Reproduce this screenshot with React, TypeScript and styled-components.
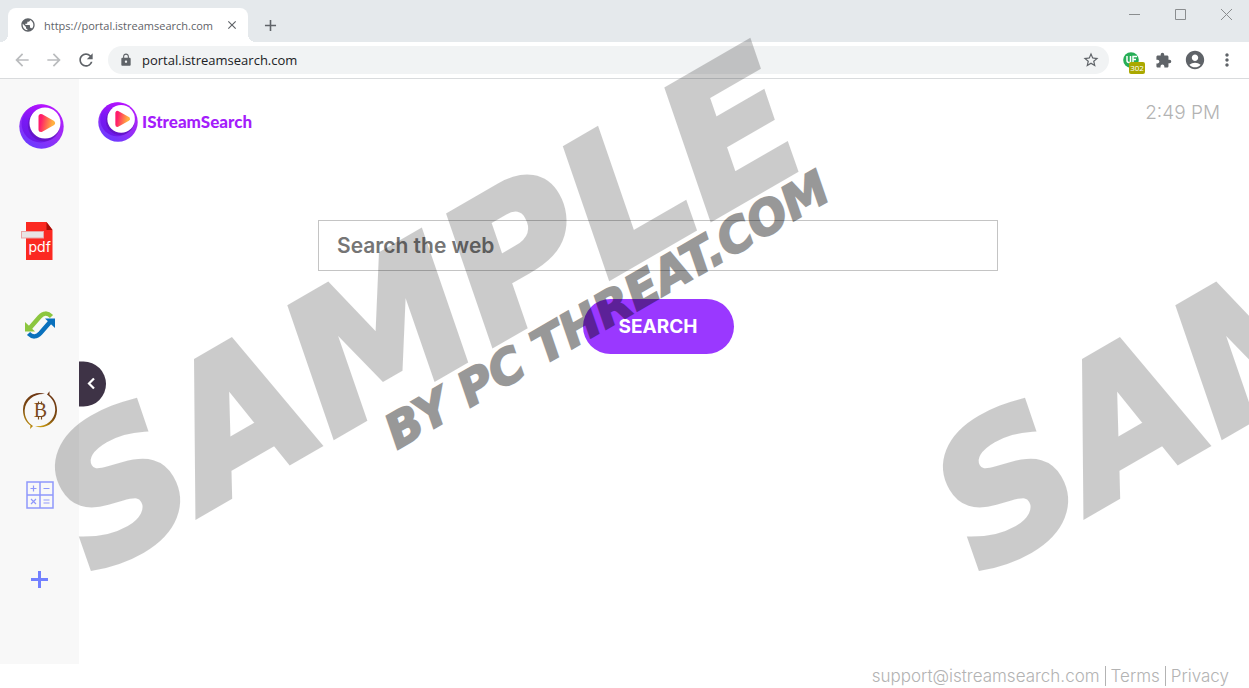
import React from "react";
import styled, { createGlobalStyle } from "styled-components";
import {
  MdAccountCircle, MdAdd, MdArrowBack, MdArrowForward, MdClose, MdExtension,
  MdLock, MdMoreVert, MdPublic, MdRefresh, MdStarBorder,
} from "react-icons/md";

const GlobalStyle = createGlobalStyle`
  * { box-sizing: border-box; }
  body { margin: 0; background: #fff; font-family: Inter, "Liberation Sans", sans-serif; }
  button { border: 0; padding: 0; background: none; font: inherit; color: inherit; cursor: pointer; }
  a { color: inherit; text-decoration: none; }
  svg { flex: none; }
`;

const Page = styled.div`
  position: relative;
  display: flex;
  flex-direction: column;
  min-height: 100vh;
  overflow: hidden;
`;

const TabStrip = styled.div`
  display: flex;
  align-items: flex-end;
  height: 42px;
  padding-left: 8px;
  background: #e5e9ec;
`;

const Tab = styled.div`
  position: relative;
  display: flex;
  align-items: center;
  gap: 8px;
  width: 240px;
  height: 34px;
  padding: 0 8px 0 12px;
  border-radius: 8px 8px 0 0;
  background: #fff;
  color: #5f6368;
  font: 11px "Open Sans", sans-serif;

  &::before, &::after {
    content: "";
    position: absolute;
    bottom: 0;
    width: 8px;
    height: 8px;
  }
  &::before { left: -8px; background: radial-gradient(circle at 0 0, #e5e9ec 8px, #fff 8px); }
  &::after { right: -8px; background: radial-gradient(circle at 100% 0, #e5e9ec 8px, #fff 8px); }
`;

const TabTitle = styled.span`
  flex: 1;
  white-space: nowrap;
`;

const IconButton = styled.button<{ $size?: number; $color?: string }>`
  display: flex;
  align-items: center;
  justify-content: center;
  flex: none;
  width: ${(p) => p.$size ?? 32}px;
  height: ${(p) => p.$size ?? 32}px;
  color: ${(p) => p.$color ?? "#5f6368"};
`;

const NewTabButton = styled(IconButton)`
  margin-left: 5px;
`;

const WindowControls = styled.div`
  display: flex;
  align-self: flex-start;
  margin-left: auto;
`;

const WindowButton = styled.button`
  display: flex;
  align-items: center;
  justify-content: center;
  width: 46px;
  height: 28px;
  color: #8a8d8f;
`;

const Toolbar = styled.div`
  display: flex;
  align-items: center;
  height: 37px;
  padding: 0 6px;
  border-bottom: 1px solid #d9dbdd;
`;

const AddressBar = styled.div`
  display: flex;
  align-items: center;
  flex: 1;
  gap: 9px;
  height: 28px;
  margin: 0 6px;
  padding: 0 4px 0 11px;
  border-radius: 14px;
  background: #f1f3f4;
  color: #5f6368;
`;

const AddressInput = styled.input`
  flex: 1;
  border: 0;
  padding: 0;
  background: none;
  outline: none;
  color: #202124;
  font: 13px "Open Sans", sans-serif;
`;

const ExtensionButton = styled(IconButton)`
  position: relative;
`;

const Badge = styled.span`
  position: absolute;
  right: 2px;
  bottom: 2px;
  width: 16px;
  height: 12px;
  border-radius: 2px;
  background: #aaa800;
  color: #fff;
  font: 8px/12px "Open Sans", sans-serif;
  text-align: center;
`;

const Portal = styled.div`
  position: relative;
  display: flex;
  flex-direction: column;
  flex: 1;
`;

const Columns = styled.div`
  display: flex;
  flex: 1;
`;

const Sidebar = styled.nav`
  display: flex;
  flex-direction: column;
  align-items: center;
  width: 79px;
  padding-top: 25px;
  background: #f8f8f8;
`;

const SideHome = styled.a`
  display: flex;
  height: 45px;
  margin: 0 0 48px 4px;
`;

const SideLink = styled.a`
  display: flex;
  align-items: center;
  justify-content: center;
  width: 79px;
  height: 85px;
`;

const SideToggle = styled.button`
  position: absolute;
  left: 79px;
  top: 50%;
  display: flex;
  align-items: center;
  justify-content: center;
  width: 27px;
  height: 45px;
  padding-right: 3px;
  transform: translateY(-50%);
  border-radius: 0 23px 23px 0;
  background: #3e3346;
  color: #fff;
`;

const Content = styled.main`
  flex: 1;
  padding-right: 12px;
`;

const Header = styled.header`
  display: flex;
  justify-content: space-between;
  padding: 22px 17px 0 19px;
`;

const Brand = styled.a`
  display: flex;
  align-items: center;
  gap: 4px;
  height: 41px;
  color: #a41dfb;
  font: 900 17px Lato, sans-serif;
`;

const Clock = styled.time`
  color: #b3b3b3;
  font-size: 19px;
  font-weight: 300;
  line-height: 24px;
`;

const SearchForm = styled.form`
  display: flex;
  flex-direction: column;
  align-items: center;
  gap: 28px;
  padding: 78px 16px 0;
`;

const SearchInput = styled.input`
  width: 100%;
  max-width: 680px;
  height: 51px;
  padding: 0 18px;
  border: 1px solid #c4c4c4;
  border-radius: 0;
  outline: none;
  background: #fff;
  color: #444;
  font: 600 21px Inter, sans-serif;
  &::placeholder { color: #757575; opacity: 1; }
`;

const SearchButton = styled.button`
  width: 151px;
  height: 55px;
  border-radius: 28px;
  background: #9a38ff;
  color: #fff;
  font: 700 19px Inter, sans-serif;
`;

const Footer = styled.footer`
  display: flex;
  align-items: center;
  justify-content: flex-end;
  height: 24px;
  padding-right: 20px;
  color: #b3b3b3;
  font-size: 17px;
  font-weight: 300;
  line-height: 20px;
`;

const FooterLink = styled.a`
  padding-left: 5px;
  & + & { margin-left: 5px; border-left: 1px solid #b3b3b3; }
`;

const WatermarkLayer = styled.div`
  position: absolute;
  inset: 0;
  overflow: hidden;
  pointer-events: none;
`;

const WatermarkLine = styled.span<{ $x: number; $y: number; $size: number; $stroke: number; $alpha: number }>`
  position: absolute;
  left: ${(p) => p.$x}px;
  top: ${(p) => p.$y}px;
  transform: rotate(-30deg);
  transform-origin: 0 0;
  color: #000;
  opacity: ${(p) => p.$alpha};
  font: oblique bold ${(p) => p.$size}px/1 "DejaVu Sans", sans-serif;
  -webkit-text-stroke: ${(p) => p.$stroke}px #000;
  white-space: nowrap;
`;

function PlayLogo({ size, id }: { size: number; id: string }) {
  return (
    <svg width={size} height={size} viewBox="0 0 45 45" aria-hidden="true">
      <defs>
        <linearGradient id={`${id}-ring`} x1="0.8" y1="0.1" x2="0.3" y2="1">
          <stop offset="0" stopColor="#b41cff" />
          <stop offset="0.5" stopColor="#9a2cf5" />
          <stop offset="1" stopColor="#6a3bff" />
        </linearGradient>
        <linearGradient id={`${id}-inner`} x1="0.6" y1="0" x2="0.3" y2="1">
          <stop offset="0" stopColor="#b912ff" />
          <stop offset="0.5" stopColor="#7a18f5" />
          <stop offset="1" stopColor="#6a1ae8" />
        </linearGradient>
        <linearGradient id={`${id}-play`} x1="0" y1="0.3" x2="1" y2="0.5">
          <stop offset="0" stopColor="#ff1d6c" />
          <stop offset="0.4" stopColor="#ff5a55" />
          <stop offset="1" stopColor="#ffb03f" />
        </linearGradient>
      </defs>
      <circle cx="22.5" cy="22.5" r="22.2" fill={`url(#${id}-ring)`} />
      <circle cx="21.5" cy="19.5" r="19" fill={`url(#${id}-inner)`} />
      <circle cx="25" cy="21" r="16.2" fill="#5a12a8" opacity="0.5" />
      <circle cx="26" cy="19" r="15.5" fill="#fff" />
      <path
        d="M22 12.500v13L33.500 19z"
        fill={`url(#${id}-play)`}
        stroke={`url(#${id}-play)`}
        strokeWidth="5"
        strokeLinejoin="round"
      />
    </svg>
  );
}

function PdfIcon() {
  return (
    <svg width="38" height="38" viewBox="2 -1 38 38" overflow="visible" aria-hidden="true">
      <path d="M7 0h20.500l6 8v30H7z" fill="#fb2921" />
      <path d="M27.500 0l6 8h-6z" fill="#a80e08" />
      <rect x="2.500" y="9.500" width="22" height="6.500" fill="#e8e4e4" stroke="#e9a3a3" />
      <text x="9.500" y="30" fontSize="14" fontFamily="Inter, sans-serif" fill="#fff">pdf</text>
    </svg>
  );
}

const swapArrow = "M4.500 18.500L14.500 7Q20.500 0.500 26.500 6.500";

function SwapIcon() {
  return (
    <svg width="30" height="30" viewBox="0 0 30 30" aria-hidden="true">
      <path d={swapArrow} fill="none" stroke="#8cc63f" strokeWidth="4.500" />
      <path d="M0 12v9.500h10z" fill="#8cc63f" />
      <g transform="rotate(180 15 15)">
        <path d={swapArrow} fill="none" stroke="#0a71bd" strokeWidth="4.500" />
        <path d="M0 12v9.500h10z" fill="#0a71bd" />
      </g>
    </svg>
  );
}

function BitcoinIcon() {
  return (
    <svg width="36" height="38" viewBox="0 0 36 38" aria-hidden="true">
      <defs>
        <linearGradient id="coin" x1="0.7" y1="0" x2="0.3" y2="1">
          <stop offset="0" stopColor="#6b3413" />
          <stop offset="0.6" stopColor="#7c4a10" />
          <stop offset="1" stopColor="#c99a10" />
        </linearGradient>
      </defs>
      <g fill="url(#coin)">
        <path d="M23 3C13-.5 1.500 6 1 18.500.8 27 5 32.500 8.500 34.500l-.5 3.500 3-3C5 31 2.400 25 2.700 19 3.500 8.500 13 2 23 3z" />
        <path d="M13 35.200c10 3.500 21.500-3 22-15.500C35.200 11.500 31 6 27.500 3.800L27.500.2 25 3.500c6 4 8.500 10 8.200 16-.7 10.500-10.200 16.700-20.200 15.700z" />
      </g>
      <text x="18.500" y="26" textAnchor="middle" fontSize="20" fontFamily="'Liberation Serif', serif" fill="#7a4a1c">B</text>
      <path d="M16.500 10.500v3M19.500 10.500v3M16.500 25.500v3M19.500 25.500v3" stroke="#7a4a1c" strokeWidth="1.200" />
    </svg>
  );
}

function CalculatorIcon() {
  return (
    <svg width="28" height="28" viewBox="0 0 28 28" fill="none" stroke="#8f98fb" aria-hidden="true">
      <rect x="1" y="1" width="26" height="26" strokeWidth="1.500" />
      <path d="M14 1v26M1 14h26" strokeWidth="1.500" />
      <path d="M4.500 7.500h6M7.500 4.500v6M17.500 7.500h6M5 18l5 5M10 18l-5 5M17.500 19h6M17.500 22h6" strokeWidth="1.200" />
    </svg>
  );
}

function PlusIcon() {
  return (
    <svg width="17" height="17" viewBox="0 0 17 17" aria-hidden="true">
      <path d="M8.500 0v17M0 8.500h17" stroke="#7280ff" strokeWidth="3" />
    </svg>
  );
}

const shortcuts = [
  { label: "PDF tools", icon: <PdfIcon /> },
  { label: "Converter", icon: <SwapIcon /> },
  { label: "Bitcoin", icon: <BitcoinIcon /> },
  { label: "Calculator", icon: <CalculatorIcon /> },
  { label: "Add shortcut", icon: <PlusIcon /> },
];

const watermarkTiles = [0, 888];

export default function App() {
  return (
    <>
      <GlobalStyle />
      <Page>
        <TabStrip>
          <Tab>
            <MdPublic size={16} />
            <TabTitle>https://portal.istreamsearch.com</TabTitle>
            <IconButton $size={16} aria-label="Close tab"><MdClose size={14} /></IconButton>
          </Tab>
          <NewTabButton $size={34} aria-label="New tab"><MdAdd size={19} /></NewTabButton>
          <WindowControls>
            <WindowButton aria-label="Minimize">
              <svg width="11" height="11"><path d="M0 5.500h11" stroke="currentColor" /></svg>
            </WindowButton>
            <WindowButton aria-label="Maximize">
              <svg width="11" height="11"><path d="M.5.500h10v10H.5z" fill="none" stroke="currentColor" /></svg>
            </WindowButton>
            <WindowButton aria-label="Close window">
              <svg width="11" height="11"><path d="M0 0l11 11M11 0L0 11" stroke="currentColor" /></svg>
            </WindowButton>
          </WindowControls>
        </TabStrip>

        <Toolbar>
          <IconButton $color="#babcbe" aria-label="Back"><MdArrowBack size={20} /></IconButton>
          <IconButton $color="#babcbe" aria-label="Forward"><MdArrowForward size={20} /></IconButton>
          <IconButton aria-label="Reload"><MdRefresh size={20} /></IconButton>
          <AddressBar>
            <MdLock size={14} />
            <AddressInput aria-label="Address" defaultValue="portal.istreamsearch.com" />
            <IconButton $size={28} aria-label="Bookmark"><MdStarBorder size={18} /></IconButton>
          </AddressBar>
          <ExtensionButton aria-label="Extension">
            <svg width="16" height="16" viewBox="0 0 16 16" aria-hidden="true">
              <circle cx="8" cy="8" r="7.800" fill="#27ae57" />
              <path d="M4 4v4.500q0 2 2 2h1.500V4M14 4.500h-4v6M10 7.500h3" fill="none" stroke="#fff" strokeWidth="1.500" />
            </svg>
            <Badge>302</Badge>
          </ExtensionButton>
          <IconButton aria-label="Extensions"><MdExtension size={17} /></IconButton>
          <IconButton aria-label="Profile"><MdAccountCircle size={22} /></IconButton>
          <IconButton aria-label="Menu"><MdMoreVert size={20} /></IconButton>
        </Toolbar>

        <Portal>
          <Columns>
            <Sidebar aria-label="Shortcuts">
              <SideHome href="#" aria-label="Home"><PlayLogo size={45} id="side" /></SideHome>
              {shortcuts.map((s) => (
                <SideLink key={s.label} href="#" aria-label={s.label}>{s.icon}</SideLink>
              ))}
            </Sidebar>
            <Content>
              <Header>
                <Brand href="#"><PlayLogo size={40} id="brand" />IStreamSearch</Brand>
                <Clock>2:49 PM</Clock>
              </Header>
              <SearchForm onSubmit={(e) => e.preventDefault()}>
                <SearchInput aria-label="Search the web" placeholder="Search the web" />
                <SearchButton type="submit">SEARCH</SearchButton>
              </SearchForm>
            </Content>
          </Columns>
          <Footer>
            <FooterLink href="#">support@istreamsearch.com</FooterLink>
            <FooterLink href="#">Terms</FooterLink>
            <FooterLink href="#">Privacy</FooterLink>
          </Footer>
          <SideToggle aria-label="Collapse sidebar">
            <svg width="8" height="12" viewBox="0 0 8 12" aria-hidden="true">
              <path d="M7 1L2 6l5 5" fill="none" stroke="#fff" strokeWidth="2.200" />
            </svg>
          </SideToggle>
        </Portal>

        <WatermarkLayer aria-hidden="true">
          {watermarkTiles.map((x) => (
            <React.Fragment key={x}>
              <WatermarkLine $x={x + 16} $y={440} $size={184} $stroke={6} $alpha={0.2}>SAMPLE</WatermarkLine>
              {x === 0 && (
                <WatermarkLine $x={377} $y={415} $size={47} $stroke={2} $alpha={0.4}>BY PC THREAT.COM</WatermarkLine>
              )}
            </React.Fragment>
          ))}
        </WatermarkLayer>
      </Page>
    </>
  );
}
